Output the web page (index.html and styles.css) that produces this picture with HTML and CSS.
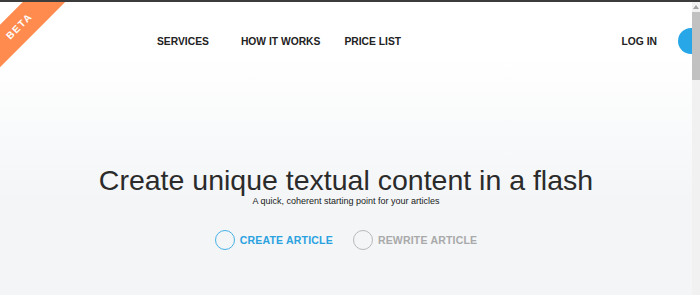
FILE: index.html
```html
<!DOCTYPE html>
<html lang="en">
<head>
    <meta charset="UTF-8">
    <meta name="viewport" content="width=device-width, initial-scale=1.0">
    <title>Textual content generator</title>
    <link rel="stylesheet" href="styles.css">
</head>
<body>

    <div class="window">
        <div class="page">
            <!-- beta ribbon -->
            <div class="ribbon"><span>BETA</span></div>

            <header class="topbar">
                <nav class="menu">
                    <a href="#" class="menu-link wide">SERVICES</a>
                    <a href="#" class="menu-link">HOW IT WORKS</a>
                    <a href="#" class="menu-link">PRICE LIST</a>
                </nav>
                <a href="#" class="login">LOG IN</a>
                <span class="signup"></span>
            </header>

            <section class="hero">
                <h1>Create unique textual content in a flash</h1>
                <p class="subtitle">A quick, coherent starting point for your articles</p>

                <div class="modes">
                    <label class="mode active"><span class="radio"></span>CREATE ARTICLE</label>
                    <label class="mode"><span class="radio"></span>REWRITE ARTICLE</label>
                </div>
            </section>
        </div>

        <!-- scrollbar -->
        <div class="scrollbar">
            <span class="arrow"></span>
            <span class="thumb"></span>
        </div>
    </div>

</body>
</html>
```

FILE: styles.css
```css
html, body {
    margin: 0;
    padding: 0;
}
body {
    font-family: "Liberation Sans", Arial, sans-serif;
    color: #222;
}
.window {
    display: flex;
    height: 293px;
    border-top: 2px solid #3c3c3c;
    overflow: hidden;
}
.page {
    position: relative;
    flex: 1;
    overflow: hidden;
    background: linear-gradient(to bottom, #ffffff 0, #ffffff 55px, #f3f5f7 200px);
}
/* ribbon */
.ribbon {
    position: absolute;
    top: 0;
    left: 0;
    width: 72px;
    height: 72px;
    overflow: hidden;
}
.ribbon span {
    position: absolute;
    left: -28px;
    top: 7px;
    width: 100px;
    height: 30px;
    padding-right: 7px;
    box-sizing: border-box;
    transform: rotate(-45deg);
    background-color: #ff8b4f;
    color: #fff;
    font-size: 10px;
    font-weight: bold;
    letter-spacing: 1.5px;
    line-height: 30px;
    text-align: center;
}
/* header */
.topbar {
    display: flex;
    align-items: center;
    height: 78px;
    padding-left: 157px;
}
.menu {
    display: flex;
}
.menu-link,
.login {
    color: #222;
    font-size: 10.3px;
    font-weight: bold;
    text-decoration: none;
}
.menu-link {
    margin-right: 24px;
}
.menu-link.wide {
    margin-right: 32px;
}
.login {
    margin-left: auto;
}
.signup {
    flex-shrink: 0;
    width: 26px;
    height: 26px;
    margin-left: 21px;
    margin-right: -12px;
    border-radius: 50%;
    background-color: #27a7e7;
}
/* hero */
.hero {
    padding-top: 86px;
    text-align: center;
}
.hero h1 {
    margin: 0;
    font-size: 28.5px;
    font-weight: normal;
    line-height: 1;
    color: #2b2b2b;
}
.subtitle {
    margin: 1px 0 0;
    font-size: 9px;
    line-height: 11px;
    color: #1a1a1a;
}
.modes {
    display: flex;
    justify-content: center;
    gap: 20px;
    margin-top: 23px;
}
.mode {
    display: flex;
    align-items: center;
    gap: 5px;
    color: #a9a9a9;
    font-size: 10.5px;
    font-weight: bold;
    letter-spacing: 0.2px;
    cursor: pointer;
}
.radio {
    width: 18px;
    height: 18px;
    border: 1px solid #b9b9b9;
    border-radius: 50%;
}
.mode.active {
    color: #2aa2e0;
}
.mode.active .radio {
    border-color: #47b1e6;
}
/* fake scrollbar */
.scrollbar {
    display: flex;
    flex-direction: column;
    align-items: center;
    width: 8px;
    background-color: #f1f1f1;
}
.arrow {
    width: 0;
    height: 0;
    margin-top: 3px;
    border-left: 3px solid transparent;
    border-right: 3px solid transparent;
    border-bottom: 4px solid #a3a3a3;
}
.thumb {
    width: 8px;
    height: 68px;
    margin-top: 3px;
    background-color: #c1c1c1;
}
```
